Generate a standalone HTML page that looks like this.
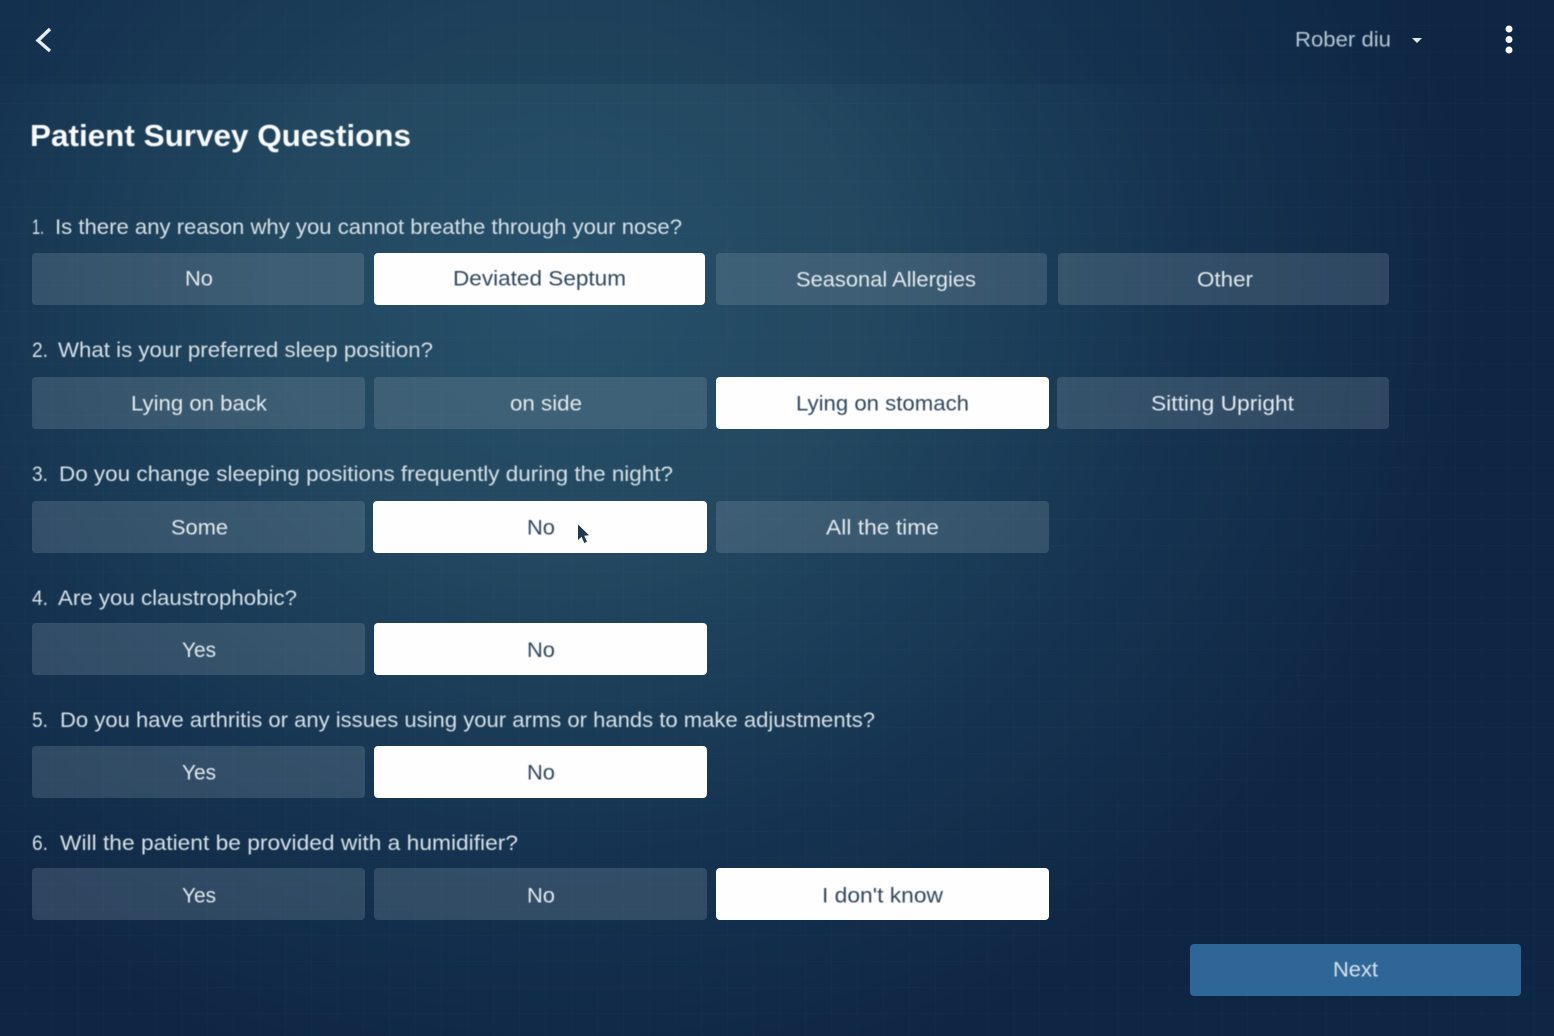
<!DOCTYPE html>
<html><head><meta charset="utf-8"><title>Patient Survey Questions</title>
<style>
html,body{margin:0;padding:0;width:1554px;height:1036px;overflow:hidden;background:#0f2745}
svg{display:block}
text{font-family:"Liberation Sans",sans-serif;white-space:pre}
.q{font-size:21px;fill:#d6e0e6}
.b{font-size:21px;fill:#e2eaee;text-anchor:start}
.d{font-size:21px;fill:#30465b}
.o{fill:#8b9fb0;fill-opacity:.25}
.w{fill:#fefeff}
</style></head><body>
<svg width="1554" height="1036" viewBox="0 0 1554 1036" xmlns="http://www.w3.org/2000/svg">
<defs>
<radialGradient id="bg" gradientUnits="userSpaceOnUse" cx="570" cy="290" r="920" gradientTransform="translate(570 290) scale(1 .9) translate(-570 -290)">
<stop offset="0" stop-color="#27506a"/><stop offset=".32" stop-color="#234860"/><stop offset=".64" stop-color="#163552"/><stop offset="1" stop-color="#0e2543"/>
</radialGradient>
<pattern id="grid" width="26" height="26" patternUnits="userSpaceOnUse">
<path d="M26 0V26M0 26H26" fill="none" stroke="#9fc0d8" stroke-opacity=".035"/>
</pattern>
<filter id="soft" x="-5%" y="-20%" width="110%" height="140%"><feGaussianBlur stdDeviation=".4"/></filter>
</defs>
<rect width="1554" height="1036" fill="url(#bg)"/>
<rect width="1554" height="1036" fill="url(#grid)"/>
<rect width="1554" height="84" fill="#0f2a48" fill-opacity=".2"/>

<path d="M50 29L38 40.500L50 51" fill="none" stroke="#e6edf1" stroke-width="3.400"/>
<path d="M1412 38h10l-5 5z" fill="#dfe7ec"/>
<circle cx="1509" cy="29" r="3.500" fill="#fff"/><circle cx="1509" cy="39.500" r="3.500" fill="#fff"/><circle cx="1509" cy="50" r="3.500" fill="#fff"/>

<g>
<rect class="o" x="32" y="253" width="332" height="52" rx="4"/>
<rect class="w" x="374" y="253" width="331" height="52" rx="4"/>
<rect class="o" x="716" y="253" width="331" height="52" rx="4"/>
<rect class="o" x="1058" y="253" width="331" height="52" rx="4"/>

<rect class="o" x="32" y="377" width="333" height="52" rx="4"/>
<rect class="o" x="374" y="377" width="333" height="52" rx="4"/>
<rect class="w" x="716" y="377" width="333" height="52" rx="4"/>
<rect class="o" x="1057" y="377" width="332" height="52" rx="4"/>

<rect class="o" x="32" y="501" width="333" height="52" rx="4"/>
<rect class="w" x="373" y="501" width="334" height="52" rx="4"/>
<rect class="o" x="716" y="501" width="333" height="52" rx="4"/>

<rect class="o" x="32" y="623" width="333" height="52" rx="4"/>
<rect class="w" x="374" y="623" width="333" height="52" rx="4"/>

<rect class="o" x="32" y="746" width="333" height="52" rx="4"/>
<rect class="w" x="374" y="746" width="333" height="52" rx="4"/>

<rect class="o" x="32" y="868" width="333" height="52" rx="4"/>
<rect class="o" x="374" y="868" width="333" height="52" rx="4"/>
<rect class="w" x="716" y="868" width="333" height="52" rx="4"/>

<rect x="1190" y="944" width="331" height="52" rx="4" fill="#2f6698"/>
</g>

<g filter="url(#soft)">
<text x="30" y="146" font-size="31" font-weight="700" fill="#f7fafb" textLength="381" lengthAdjust="spacingAndGlyphs">Patient Survey Questions</text>
<text x="1295" y="46.500" font-size="21" fill="#b4c6d2" textLength="96" lengthAdjust="spacingAndGlyphs">Rober diu</text>

<text class="q" x="32" y="234" textLength="12" lengthAdjust="spacingAndGlyphs">1.</text>
<text class="q" x="55" y="234" textLength="627" lengthAdjust="spacingAndGlyphs">Is there any reason why you cannot breathe through your nose?</text>
<text class="q" x="32" y="357" textLength="16" lengthAdjust="spacingAndGlyphs">2.</text>
<text class="q" x="58" y="357" textLength="375" lengthAdjust="spacingAndGlyphs">What is your preferred sleep position?</text>
<text class="q" x="32" y="481" textLength="16" lengthAdjust="spacingAndGlyphs">3.</text>
<text class="q" x="59" y="481" textLength="614" lengthAdjust="spacingAndGlyphs">Do you change sleeping positions frequently during the night?</text>
<text class="q" x="32" y="605" textLength="16" lengthAdjust="spacingAndGlyphs">4.</text>
<text class="q" x="58" y="605" textLength="239" lengthAdjust="spacingAndGlyphs">Are you claustrophobic?</text>
<text class="q" x="32" y="727" textLength="16" lengthAdjust="spacingAndGlyphs">5.</text>
<text class="q" x="60" y="727" textLength="815" lengthAdjust="spacingAndGlyphs">Do you have arthritis or any issues using your arms or hands to make adjustments?</text>
<text class="q" x="32" y="850" textLength="16" lengthAdjust="spacingAndGlyphs">6.</text>
<text class="q" x="60" y="850" textLength="458" lengthAdjust="spacingAndGlyphs">Will the patient be provided with a humidifier?</text>

<text class="b" x="185" y="285.500" textLength="28" lengthAdjust="spacingAndGlyphs">No</text>
<text class="d" x="453" y="285.500" textLength="173" lengthAdjust="spacingAndGlyphs">Deviated Septum</text>
<text class="b" x="796" y="286.500" textLength="180" lengthAdjust="spacingAndGlyphs">Seasonal Allergies</text>
<text class="b" x="1197" y="286.500" textLength="56" lengthAdjust="spacingAndGlyphs">Other</text>

<text class="b" x="131" y="410.500" textLength="136" lengthAdjust="spacingAndGlyphs">Lying on back</text>
<text class="b" x="510" y="410.500" textLength="72" lengthAdjust="spacingAndGlyphs">on side</text>
<text class="d" x="796" y="410.500" textLength="173" lengthAdjust="spacingAndGlyphs">Lying on stomach</text>
<text class="b" x="1151" y="410.500" textLength="143" lengthAdjust="spacingAndGlyphs">Sitting Upright</text>

<text class="b" x="171" y="534.500" textLength="57" lengthAdjust="spacingAndGlyphs">Some</text>
<text class="d" x="527" y="534.500" textLength="28" lengthAdjust="spacingAndGlyphs">No</text>
<text class="b" x="826" y="534.500" textLength="113" lengthAdjust="spacingAndGlyphs">All the time</text>

<text class="b" x="182" y="657" textLength="34" lengthAdjust="spacingAndGlyphs">Yes</text>
<text class="d" x="527" y="657" textLength="28" lengthAdjust="spacingAndGlyphs">No</text>

<text class="b" x="182" y="779.500" textLength="34" lengthAdjust="spacingAndGlyphs">Yes</text>
<text class="d" x="527" y="779.500" textLength="28" lengthAdjust="spacingAndGlyphs">No</text>

<text class="b" x="182" y="902.500" textLength="34" lengthAdjust="spacingAndGlyphs">Yes</text>
<text class="b" x="527" y="902.500" textLength="28" lengthAdjust="spacingAndGlyphs">No</text>
<text class="d" x="822" y="902.500" textLength="121" lengthAdjust="spacingAndGlyphs">I don't know</text>

<text x="1333" y="976.500" font-size="21" fill="#d6e4ec" textLength="45" lengthAdjust="spacingAndGlyphs">Next</text>
</g>

<path d="M578 524.500L578 540L581.500 536.800L584.300 543L587 541.800L584.300 535.800L589 535.300Z" fill="#22384c"/>
</svg>
</body></html>
